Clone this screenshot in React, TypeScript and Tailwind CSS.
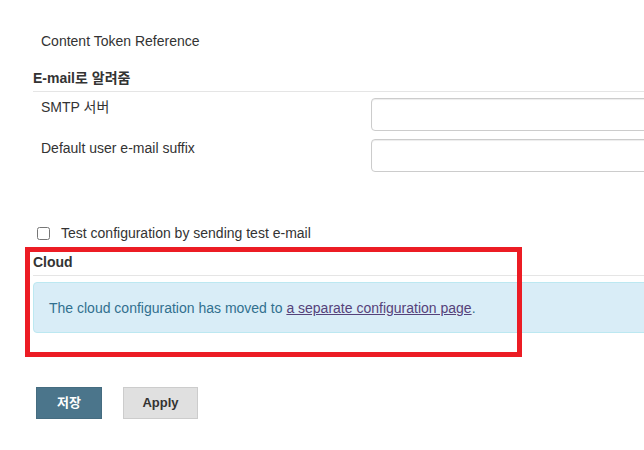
import React from 'react';

const App: React.FC = () => {
  return (
    <div className="w-[644px] h-[450px] overflow-hidden bg-white text-[14px] leading-[20px] text-[#333] font-['Liberation_Sans','Noto_Sans_CJK_KR',sans-serif]">
      <div className="w-[720px] pl-[33px]">
        <div className="pt-[31px] pl-[8px]">Content Token Reference</div>

        {/* E-mail section */}
        <div className="mt-[17px] pb-[3px] border-b border-[#e5e5e5] font-bold">E-mail로 알려줌</div>

        <div className="flex items-start pt-[6px]">
          <label className="w-[338px] pl-[8px] -mt-[1px]">SMTP 서버</label>
          <input type="text" className="h-[33px] w-[330px] rounded-[4px] border border-[#ccc] bg-white shadow-[inset_0_1px_1px_rgba(0,0,0,0.075)]" />
        </div>
        <div className="flex items-start pt-[8px]">
          <label className="w-[338px] pl-[8px] -mt-[1px]">Default user e-mail suffix</label>
          <input type="text" className="h-[33px] w-[330px] rounded-[4px] border border-[#ccc] bg-white shadow-[inset_0_1px_1px_rgba(0,0,0,0.075)]" />
        </div>

        <div className="flex items-center mt-[51px] pl-[4px] h-[20px]">
          <input type="checkbox" className="w-[13px] h-[13px] m-0" />
          <span className="ml-[11px]">Test configuration by sending test e-mail</span>
        </div>

        {/* Cloud section */}
        <div className="relative mt-[9px]">
          <div className="pb-[3px] border-b border-[#e5e5e5] font-bold">Cloud</div>
          <div className="mt-[6px] h-[51px] flex items-center rounded-[4px] border border-[#bce8f1] bg-[#d9edf7] pl-[15px] text-[#31708f]">
            <span>
              The cloud configuration has moved to{' '}
              <a href="#" className="underline text-[#55427a]">a separate configuration page</a>.
            </span>
          </div>
          {/* highlight overlay */}
          <div className="absolute left-[-8px] top-[-5px] w-[497px] h-[110px] border-[5px] border-[#ec1c24] pointer-events-none" />
        </div>

        <div className="flex gap-[21px] mt-[54px] pl-[3px]">
          <button className="w-[66px] h-[32px] bg-[#4b758b] border border-[#456c80] text-white text-[13px] font-bold">저장</button>
          <button className="w-[75px] h-[32px] bg-[#e0e0e0] border border-[#ccc] text-[#333] text-[13px] font-bold">Apply</button>
        </div>
      </div>
    </div>
  );
};

export default App;
